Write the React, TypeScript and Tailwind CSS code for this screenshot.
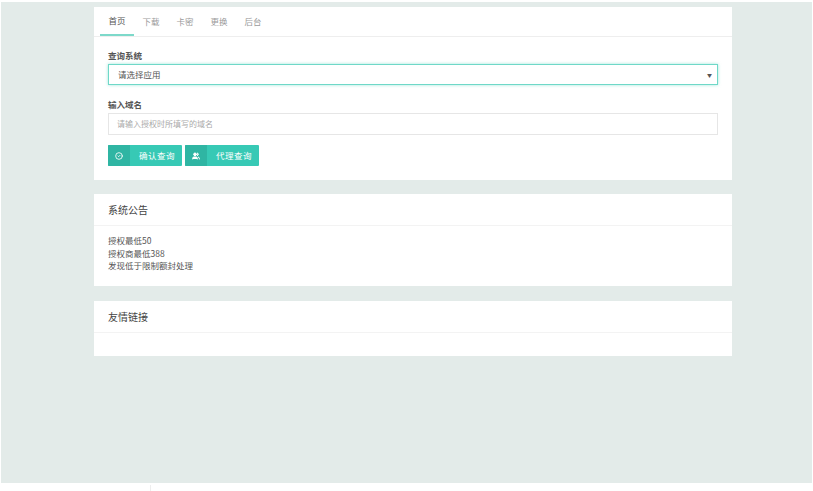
import { CircleCheck, Users } from "lucide-react";

const tabs = ["首页", "下载", "卡密", "更换", "后台"];
const notices = ["授权最低50", "授权商最低388", "发现低于限制额封处理"];

const font = { fontFamily: '"Noto Sans CJK SC", "Noto Sans", sans-serif' };

const App = () => {
  return (
    <div className="w-[813px] h-[491px] bg-white overflow-hidden" style={font}>
      <div className="ml-[1px] mt-[2px] w-[811px] h-[481px] bg-[#e3ebe9] pt-[5px]">
        <div className="ml-[93px] w-[638px] flex flex-col gap-[14px]">
          {/* Query card */}
          <div className="bg-white">
            <div className="flex h-[30px] border-b border-[#eeeeee] pl-[6px]">
              {tabs.map((t, i) => (
                <div
                  key={t}
                  className={`w-[34px] flex items-center justify-center text-[8.5px] ${
                    i === 0 ? "text-[#555] border-b-2 border-[#7dd9ca]" : "text-[#9a9a9a]"
                  }`}
                >
                  {t}
                </div>
              ))}
            </div>
            <div className="px-[14px] pt-[12px] pb-[14px]">
              <div className="text-[8.5px] font-semibold text-[#555] leading-[12px] mb-[3px]">查询系统</div>
              <div className="h-[21px] border border-[#6fd8c8] shadow-[0_0_3px_rgba(80,210,190,0.55)] flex items-center justify-between pl-[9px] pr-[5px]">
                <span className="text-[8.5px] text-[#555]">请选择应用</span>
                <span className="text-[5px] text-[#555]">▼</span>
              </div>
              <div className="text-[8.5px] font-semibold text-[#555] leading-[12px] mt-[13px] mb-[3px]">输入域名</div>
              <div className="h-[22px] border border-[#e6e6e6] flex items-center pl-[8px]">
                <span className="text-[8px] text-[#aaaaaa]">请输入授权时所填写的域名</span>
              </div>
              <div className="flex gap-[3px] mt-[10px]">
                <button className="h-[21px] w-[74px] flex bg-[#37c9b5] text-white rounded-[1px] overflow-hidden">
                  <span className="w-[22px] h-full bg-[#2fb5a3] flex items-center justify-center">
                    <CircleCheck className="w-[8px] h-[8px]" strokeWidth={2.5} />
                  </span>
                  <span className="flex-1 flex items-center justify-center pl-[2px] text-[8.5px] tracking-[0.5px]">确认查询</span>
                </button>
                <button className="h-[21px] w-[74px] flex bg-[#37c9b5] text-white rounded-[1px] overflow-hidden">
                  <span className="w-[22px] h-full bg-[#2fb5a3] flex items-center justify-center">
                    <Users className="w-[8px] h-[8px]" strokeWidth={3} fill="white" />
                  </span>
                  <span className="flex-1 flex items-center justify-center pl-[2px] text-[8.5px] tracking-[0.5px]">代理查询</span>
                </button>
              </div>
            </div>
          </div>

          {/* Notice card */}
          <div className="bg-white h-[92px]">
            <div className="h-[32px] border-b border-[#f3f3f3] px-[14px] flex items-center text-[10px] text-[#444]">
              系统公告
            </div>
            <div className="px-[14px] pt-[8px] text-[8.5px] text-[#555] leading-[12.5px]">
              {notices.map(n => (
                <div key={n}>{n}</div>
              ))}
            </div>
          </div>

          {/* Links card */}
          <div className="bg-white h-[55px] mt-[1px]">
            <div className="h-[32px] border-b border-[#f3f3f3] px-[14px] flex items-center text-[10px] text-[#444]">
              友情链接
            </div>
          </div>
        </div>
      </div>
      <div className="ml-[150px] mt-[2px] w-[1px] h-[6px] bg-[#eeeeee]" />
    </div>
  );
};

export default App;
